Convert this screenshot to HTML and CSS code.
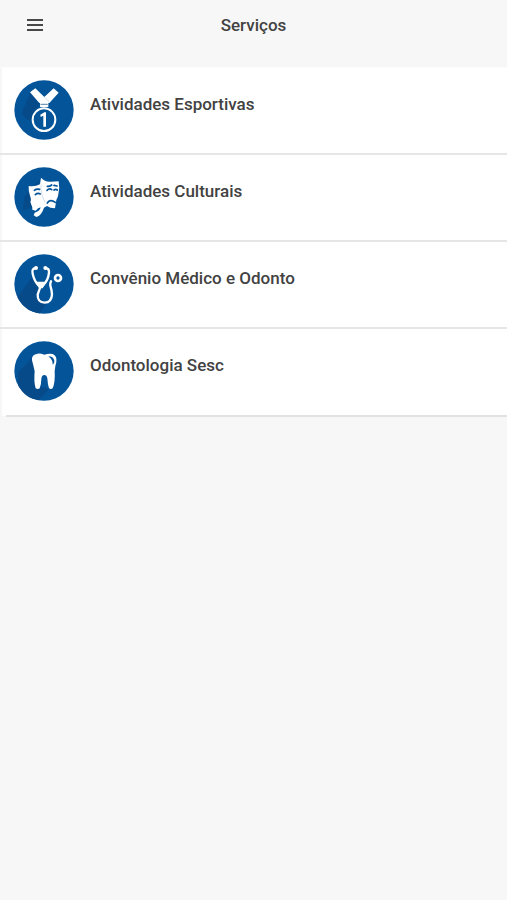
FILE: index.html
```html
<!DOCTYPE html>
<html lang="pt-BR">
<head>
<meta charset="utf-8">
<meta name="viewport" content="width=device-width, initial-scale=1">
<title>Serviços</title>
<link rel="stylesheet" href="styles.css">
</head>
<body>
<header class="topbar">
  <button class="menu" type="button" aria-label="Menu">
    <svg viewBox="0 0 18 12" aria-hidden="true"><path d="M1 1h16M1 6h16M1 11h16"/></svg>
  </button>
  <h1 class="title">Serviços</h1>
</header>
<main>
  <ul class="services">
    <li><a class="service" href="#esportivas">
      <svg class="icon" viewBox="27 28 180 180" aria-hidden="true">
        <circle class="disc" cx="117" cy="118" r="89"/>
        <path class="shade" d="M76 66L50 128Q60 150 84 150L102 98Z"/>
        <path class="ink" d="M75 65L91 53L118 79L146 53L161 66L133 97H103Z"/>
        <path class="fold" d="M118 79L133 94"/>
        <path class="ink" d="M105 96h25v13h-25z"/>
        <path class="clasp" d="M108 101h19"/>
        <circle class="ring" cx="117" cy="147" r="34"/>
        <path class="ink" d="M106 132L118 125H123V168H115V135L107 139Z"/>
      </svg>
      <span class="name">Atividades Esportivas</span>
    </a></li>
    <li><a class="service" href="#culturais">
      <svg class="icon" viewBox="27 28 180 180" aria-hidden="true">
        <circle class="disc" cx="117" cy="118" r="89"/>
        <path class="shade" d="M108 61L58 117L54 158L80 150L78 124Z"/>
        <path class="ink" d="M71 85Q89 88 105 80L108 60Q121 74 137 72Q149 71 161 71Q165 91 160 110Q159 120 154 127L150 152Q135 152 126 145L117 150Q110 173 94 178L86 173L89 165Q104 162 107 149Q99 150 92 159L82 156Q83 147 79 141L76 132Q80 126 75 114Q70 100 71 85Z"/>
        <path class="cut" d="M88 98Q94 93 104 95M91 111Q98 105 106 109M127 86Q133 87 140 82M147 83L156 85M126 98Q133 91 140 96M147 97Q152 93 157 97M127 136Q135 123 151 134"/>
        <path class="fold" d="M108 82Q106 110 120 132"/>
      </svg>
      <span class="name">Atividades Culturais</span>
    </a></li>
    <li><a class="service" href="#convenio">
      <svg class="icon" viewBox="27 28 180 180" aria-hidden="true">
        <circle class="disc" cx="117" cy="118" r="89"/>
        <path class="shade" d="M83 94L37 158Q60 202 105 206L124 176L98 155L105 126Z"/>
        <path class="tube" d="M92 70Q79 72 83 87Q88 110 101 122Q108 128 114 122Q130 107 132 83Q133 72 122 70"/>
        <circle class="ink" cx="93" cy="70" r="6"/>
        <circle class="ink" cx="121" cy="70" r="6"/>
        <path class="ink" d="M90 111L124 111L113 131H102Z"/>
        <path class="tube" d="M107 125Q102 137 98 150Q97 173 119 174Q140 173 141 149Q140 135 136 123Q135 115 138 110"/>
        <circle class="bell" cx="159" cy="100" r="9"/>
      </svg>
      <span class="name">Convênio Médico e Odonto</span>
    </a></li>
    <li><a class="service" href="#odontologia">
      <svg class="icon" viewBox="27 30 180 180" aria-hidden="true">
        <circle class="disc" cx="117" cy="120" r="89"/>
        <path class="shade" d="M82 79L39 126V162Q61 204 102 207L132 174L92 162Z"/>
        <path class="ink" d="M81 88Q79 70 98 68Q107 67 118 71Q131 66 143 69Q157 74 154 94Q150 106 149 120Q151 154 143 172Q138 176 132 172Q128 160 127 142Q125 132 118 132Q110 132 109 144Q109 160 104 172Q98 176 92 172Q86 153 89 121Q86 106 81 88Z"/>
        <path class="blue" d="M130 76Q145 76 148 89Q149 98 143 101Q144 86 130 76Z"/>
      </svg>
      <span class="name">Odontologia Sesc</span>
    </a></li>
  </ul>
</main>
</body>
</html>
```
FILE: styles.css
```css
* { box-sizing: border-box; }

body {
  margin: 0;
  min-height: 100vh;
  background: #f7f7f7;
  color: #424242;
  font-family: Roboto, sans-serif;
}

.topbar {
  display: grid;
  grid-template-columns: 50px 1fr 50px;
  align-items: center;
  height: 67px;
  padding: 0 10px 18px;
}

.menu {
  display: flex;
  align-items: center;
  justify-content: center;
  height: 48px;
  padding: 0;
  border: 0;
  background: none;
}

.menu svg {
  width: 18px;
  height: 12px;
  stroke: #484848;
  stroke-width: 2;
}

.title {
  margin: 0;
  font-size: 17px;
  font-weight: 500;
  line-height: 24px;
  text-align: center;
}

.services {
  margin: 0;
  padding: 0;
  list-style: none;
  border-top: 1px solid #fcfcfc;
}

.service {
  display: flex;
  gap: 16px;
  height: 87px;
  padding: 12px 14px;
  background: linear-gradient(to right, #f4f4f4, #fff 3px);
  box-shadow: inset 0 -2px #e6e6e6;
  color: inherit;
  text-decoration: none;
}

li:last-child .service {
  box-shadow: none;
}

.services::after {
  content: "";
  display: block;
  height: 2px;
  margin: -1px 0 0 6px;
  background: #e2e2e2;
}

.icon {
  flex: none;
  width: 60px;
  height: 60px;
}

.name {
  padding-top: 12px;
  font-size: 17px;
  font-weight: 500;
  line-height: 24px;
}

.disc { fill: #04549a; }
.shade { fill: #064a8a; }
.ink { fill: #fff; }
.blue { fill: #04549a; }

.ring, .tube, .bell, .cut, .fold, .clasp {
  fill: none;
  stroke: #fff;
  stroke-linecap: round;
}

.ring { stroke-width: 6; }
.tube { stroke-width: 7; }
.bell { stroke-width: 8; }
.cut { stroke: #04549a; stroke-width: 5; }
.fold { stroke: #b9cde0; stroke-width: 2; }
.clasp { stroke: #7796b8; stroke-width: 4; }
```
